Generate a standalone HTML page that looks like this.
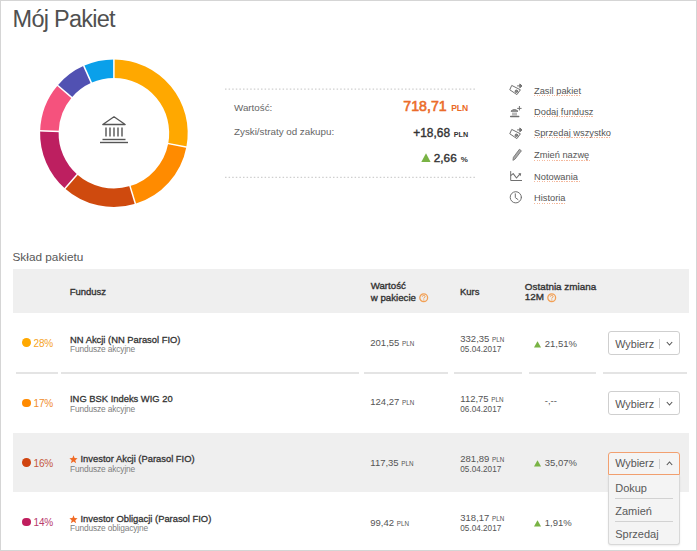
<!DOCTYPE html>
<html><head><meta charset="utf-8"><style>
html,body{margin:0;padding:0;}
body{width:697px;height:551px;overflow:hidden;position:relative;background:#fff;font-family:"Liberation Sans",sans-serif;}
.frame{position:absolute;left:0;top:0;width:697px;height:551px;box-sizing:border-box;border:1px solid #d5d5d5;}
.t{position:absolute;white-space:nowrap;}
</style></head><body>
<div class="frame"></div>
<div class="t" style="top:8.01px;font-size:23.5px;line-height:23.5px;color:#505050;letter-spacing:-0.75px;left:12.60px;">Mój Pakiet</div>
<svg style="position:absolute;left:0;top:0" width="697" height="551"><path d="M113.90 59.40A73.8 73.8 0 0 1 186.39 147.03L168.22 143.56A55.3 55.3 0 0 0 113.90 77.90Z" fill="#ffa800"/><path d="M186.39 147.03A73.8 73.8 0 0 1 135.38 203.81L129.99 186.11A55.3 55.3 0 0 0 168.22 143.56Z" fill="#ff8b00"/><path d="M135.38 203.81A73.8 73.8 0 0 1 64.92 188.40L77.20 174.57A55.3 55.3 0 0 0 129.99 186.11Z" fill="#cf4a0e"/><path d="M64.92 188.40A73.8 73.8 0 0 1 40.14 130.88L58.63 131.46A55.3 55.3 0 0 0 77.20 174.57Z" fill="#bd1f60"/><path d="M40.14 130.88A73.8 73.8 0 0 1 57.63 85.45L71.74 97.42A55.3 55.3 0 0 0 58.63 131.46Z" fill="#f5527d"/><path d="M57.63 85.45A73.8 73.8 0 0 1 83.74 65.84L91.30 82.73A55.3 55.3 0 0 0 71.74 97.42Z" fill="#5151b2"/><path d="M83.74 65.84A73.8 73.8 0 0 1 113.90 59.40L113.90 77.90A55.3 55.3 0 0 0 91.30 82.73Z" fill="#0aa0ea"/><line x1="113.90" y1="78.90" x2="113.90" y2="58.40" stroke="#fff" stroke-width="1.5"/><line x1="167.24" y1="143.37" x2="187.38" y2="147.22" stroke="#fff" stroke-width="1.5"/><line x1="129.70" y1="185.15" x2="135.67" y2="204.76" stroke="#fff" stroke-width="1.5"/><line x1="77.86" y1="173.82" x2="64.26" y2="189.15" stroke="#fff" stroke-width="1.5"/><line x1="59.63" y1="131.49" x2="39.14" y2="130.85" stroke="#fff" stroke-width="1.5"/><line x1="72.50" y1="98.06" x2="56.87" y2="84.80" stroke="#fff" stroke-width="1.5"/><line x1="91.71" y1="83.64" x2="83.33" y2="64.93" stroke="#fff" stroke-width="1.5"/><g fill="none" stroke="#555" stroke-width="1.3" stroke-linejoin="round"><path d="M114 116.8 L125.2 124.5 L102.8 124.5 Z"/></g><g stroke="#555" stroke-width="1.4"><line x1="106" y1="127.5" x2="106" y2="136.5"/><line x1="110" y1="127.5" x2="110" y2="136.5"/><line x1="114" y1="127.5" x2="114" y2="136.5"/><line x1="118" y1="127.5" x2="118" y2="136.5"/><line x1="122" y1="127.5" x2="122" y2="136.5"/><line x1="102.5" y1="139.5" x2="125.5" y2="139.5"/><line x1="100" y1="142.5" x2="128" y2="142.5"/></g></svg>
<svg style="position:absolute;left:0;top:0" width="697" height="551"><g stroke="#cfcfcf" stroke-width="1.3" stroke-dasharray="1.5 2.1"><line x1="225" y1="89.2" x2="477" y2="89.2"/><line x1="225" y1="177.4" x2="477" y2="177.4"/></g></svg>
<div class="t" style="top:103.00px;font-size:9.8px;line-height:9.8px;color:#666;left:234.00px;">Wartość:</div>
<div class="t" style="top:127.01px;font-size:9.8px;line-height:9.8px;color:#666;left:234.00px;">Zyski/straty od zakupu:</div>
<div class="t" style="top:99.01px;font-size:14.2px;line-height:14.2px;color:#eb6c2a;-webkit-text-stroke:0.6px #eb6c2a;right:250.30px;">718,71</div>
<div class="t" style="top:104.01px;font-size:8.5px;line-height:8.5px;color:#ea6a26;font-weight:700;right:228.80px;">PLN</div>
<div class="t" style="top:128.00px;font-size:11.9px;line-height:11.9px;color:#333;-webkit-text-stroke:0.38px #333;right:247.00px;">+18,68</div>
<div class="t" style="top:131.01px;font-size:7.2px;line-height:7.2px;color:#333;font-weight:700;right:228.80px;">PLN</div>
<svg style="position:absolute;left:421px;top:153px" width="10" height="9"><path d="M5 0.3 L9.6 8.9 L0.3 8.9Z" fill="#79b345"/></svg>
<div class="t" style="top:153.01px;font-size:11.8px;line-height:11.8px;color:#333;-webkit-text-stroke:0.38px #333;right:240.30px;">2,66</div>
<div class="t" style="top:156.00px;font-size:8px;line-height:8px;color:#333;font-weight:700;right:229.20px;">%</div>
<div class="t" style="top:87.01px;font-size:9.3px;line-height:9.3px;color:#555;left:534.00px;">Zasil pakiet</div>
<div class="t" style="top:108.00px;font-size:9.3px;line-height:9.3px;color:#555;left:534.00px;">Dodaj fundusz</div>
<div class="t" style="top:129.00px;font-size:9.3px;line-height:9.3px;color:#555;left:534.00px;">Sprzedaj wszystko</div>
<div class="t" style="top:151.01px;font-size:9.3px;line-height:9.3px;color:#555;left:534.00px;">Zmień nazwę</div>
<div class="t" style="top:173.01px;font-size:9.3px;line-height:9.3px;color:#555;left:534.00px;">Notowania</div>
<div class="t" style="top:194.01px;font-size:9.3px;line-height:9.3px;color:#555;left:534.00px;">Historia</div>
<div style="position:absolute;left:534px;top:95.2px;width:46.8px;height:1px;background-image:repeating-linear-gradient(to right,#f4b89c 0,#f4b89c 1.2px,transparent 1.2px,transparent 2.5px);"></div>
<div style="position:absolute;left:534px;top:116.1px;width:60.3px;height:1px;background-image:repeating-linear-gradient(to right,#f4b89c 0,#f4b89c 1.2px,transparent 1.2px,transparent 2.5px);"></div>
<div style="position:absolute;left:534px;top:137.4px;width:76.9px;height:1px;background-image:repeating-linear-gradient(to right,#f4b89c 0,#f4b89c 1.2px,transparent 1.2px,transparent 2.5px);"></div>
<div style="position:absolute;left:534px;top:159.8px;width:56.3px;height:1px;background-image:repeating-linear-gradient(to right,#f4b89c 0,#f4b89c 1.2px,transparent 1.2px,transparent 2.5px);"></div>
<div style="position:absolute;left:534px;top:181.3px;width:46px;height:1px;background-image:repeating-linear-gradient(to right,#f4b89c 0,#f4b89c 1.2px,transparent 1.2px,transparent 2.5px);"></div>
<div style="position:absolute;left:534px;top:202.8px;width:32.2px;height:1px;background-image:repeating-linear-gradient(to right,#f4b89c 0,#f4b89c 1.2px,transparent 1.2px,transparent 2.5px);"></div>
<svg style="position:absolute;left:0;top:0" width="697" height="551"><g fill="none" stroke="#707070" stroke-width="1" stroke-linecap="round" stroke-linejoin="round"><g transform="translate(509.5 84.5)"><path d="M2.6 1.1 L10.9 5.3 L7.4 10.1 L0.6 5.5 Z"/><circle cx="6.9" cy="6.8" r="1.3" fill="#888"/><path d="M8 1.4 H11"/><path d="M10.6 -0.3 L12.5 1.4 L10.6 3.1Z" fill="#707070"/></g><g transform="translate(509.5 128.5)"><path d="M2.6 1.1 L10.9 5.3 L7.4 10.1 L0.6 5.5 Z"/><circle cx="6.9" cy="6.8" r="1.3" fill="#888"/><path d="M8 1.4 H11"/><path d="M10.6 -0.3 L12.5 1.4 L10.6 3.1Z" fill="#707070"/></g><g transform="translate(510 107)"><path d="M1.2 4 Q4.4 0.8 7.7 4 Z" fill="#999"/><path d="M2 5.5 H7 V8.5 H2Z" fill="#bbb" stroke="none"/><path d="M0.6 9.5 H8.8" stroke-width="1.3"/><path d="M9.4 -0.6 V3 M7.6 1.4 H11.2"/></g><path d="M513 160 L513.4 157.3 L519.4 149.3 L521.4 150.8 L515.3 158.8 Z" fill="#aaa" stroke="#777" stroke-width="0.9"/><path d="M510.7 171.5 V180.5 H521.6"/><path d="M511 175.4 L513.2 173.6 L516.5 178 L519.8 174.2" stroke-width="1.1"/><path d="M518.3 173.2 L521.2 173.2 L520.6 176.2Z" fill="#707070" stroke="none"/><circle cx="515.8" cy="197.3" r="5.6"/><path d="M515.3 193.8 V197.6 L518 199.6"/></g></svg>
<div class="t" style="top:252.01px;font-size:11.8px;line-height:11.8px;color:#585858;left:12.50px;">Skład pakietu</div>
<div style="position:absolute;left:13px;top:269px;width:676px;height:44px;background:#efefef;"></div>
<div class="t" style="top:287.01px;font-size:9.5px;line-height:9.5px;color:#333;-webkit-text-stroke:0.35px #333;left:69.70px;">Fundusz</div>
<div class="t" style="top:281.01px;font-size:9.7px;line-height:9.7px;color:#333;-webkit-text-stroke:0.35px #333;left:370.70px;">Wartość</div>
<div class="t" style="top:293.01px;font-size:9.7px;line-height:9.7px;color:#333;-webkit-text-stroke:0.35px #333;left:370.70px;">w pakiecie</div>
<div class="t" style="top:287.01px;font-size:9.5px;line-height:9.5px;color:#333;-webkit-text-stroke:0.35px #333;left:459.90px;">Kurs</div>
<div class="t" style="top:282.00px;font-size:9.9px;line-height:9.9px;color:#333;-webkit-text-stroke:0.35px #333;left:524.80px;">Ostatnia zmiana</div>
<div class="t" style="top:292.01px;font-size:9.9px;line-height:9.9px;color:#333;-webkit-text-stroke:0.35px #333;left:524.80px;">12M</div>
<svg style="position:absolute;left:419px;top:293px" width="10" height="10"><circle cx="4.7" cy="4.7" r="3.9" fill="none" stroke="#f2a055" stroke-width="1.3"/><path d="M3.3 3.7 Q3.4 2.4 4.7 2.4 Q6.1 2.4 6.1 3.6 Q6.1 4.4 4.8 4.9 V5.5" fill="none" stroke="#f2a055" stroke-width="1"/><circle cx="4.8" cy="6.9" r="0.6" fill="#f2a055"/></svg>
<svg style="position:absolute;left:547px;top:292.5px" width="10" height="10"><circle cx="4.7" cy="4.7" r="3.9" fill="none" stroke="#f2a055" stroke-width="1.3"/><path d="M3.3 3.7 Q3.4 2.4 4.7 2.4 Q6.1 2.4 6.1 3.6 Q6.1 4.4 4.8 4.9 V5.5" fill="none" stroke="#f2a055" stroke-width="1"/><circle cx="4.8" cy="6.9" r="0.6" fill="#f2a055"/></svg>
<div style="position:absolute;left:21.9px;top:338.1px;width:8.8px;height:8.8px;background:#ffa800;border-radius:50%;"></div>
<div class="t" style="top:339.00px;font-size:10px;line-height:10px;color:#f5a325;letter-spacing:-0.2px;left:33.60px;">28%</div>
<div class="t" style="top:335.01px;font-size:9.4px;line-height:9.4px;color:#333;-webkit-text-stroke:0.3px #333;left:70.00px;">NN Akcji (NN Parasol FIO)</div>
<div class="t" style="top:345.01px;font-size:8.4px;line-height:8.4px;color:#808080;letter-spacing:-0.15px;left:70.00px;">Fundusze akcyjne</div>
<div class="t" style="top:338.01px;font-size:9.5px;line-height:9.5px;color:#555;left:370.30px;">201,55 <span style="font-size:6.3px">PLN</span></div>
<div class="t" style="top:334.01px;font-size:9.5px;line-height:9.5px;color:#555;left:460.30px;">332,35 <span style="font-size:6.3px">PLN</span></div>
<div class="t" style="top:346.00px;font-size:8.2px;line-height:8.2px;color:#555;left:460.30px;">05.04.2017</div>
<svg style="position:absolute;left:534px;top:340.8px" width="8" height="7"><path d="M3.5 0.2 L7 6.5 L0 6.5Z" fill="#79b345"/></svg>
<div class="t" style="top:339.01px;font-size:9.5px;line-height:9.5px;color:#555;left:544.80px;">21,51%</div>
<div style="position:absolute;left:608.2px;top:331.1px;width:71.8px;height:24px;box-sizing:border-box;border:1px solid #cfcfcf;border-radius:3px;background:#fff;"></div>
<div class="t" style="top:339.01px;font-size:10.8px;line-height:10.8px;color:#555;left:615.20px;">Wybierz</div>
<div style="position:absolute;left:658.8px;top:338.5px;width:1px;height:10px;background:#cfcfcf;"></div>
<svg style="position:absolute;left:666px;top:341.4px" width="8" height="5"><path d="M0.8 1 L3.5 4 L6.2 1" fill="none" stroke="#555" stroke-width="1.1"/></svg>
<div style="position:absolute;left:16px;top:372px;width:42px;height:1.5px;background:#e4e4e4;"></div>
<div style="position:absolute;left:61px;top:372px;width:297.5px;height:1.5px;background:#e4e4e4;"></div>
<div style="position:absolute;left:364px;top:372px;width:84px;height:1.5px;background:#e4e4e4;"></div>
<div style="position:absolute;left:453.7px;top:372px;width:68.3px;height:1.5px;background:#e4e4e4;"></div>
<div style="position:absolute;left:528.5px;top:372px;width:67.7px;height:1.5px;background:#e4e4e4;"></div>
<div style="position:absolute;left:602.8px;top:372px;width:84.5px;height:1.5px;background:#e4e4e4;"></div>
<div style="position:absolute;left:21.9px;top:398.7px;width:8.8px;height:8.8px;background:#ff8a00;border-radius:50%;"></div>
<div class="t" style="top:399.00px;font-size:10px;line-height:10px;color:#f08c2c;letter-spacing:-0.2px;left:33.60px;">17%</div>
<div class="t" style="top:394.00px;font-size:9.4px;line-height:9.4px;color:#333;-webkit-text-stroke:0.3px #333;left:70.00px;">ING BSK Indeks WIG 20</div>
<div class="t" style="top:405.00px;font-size:8.4px;line-height:8.4px;color:#808080;letter-spacing:-0.15px;left:70.00px;">Fundusze akcyjne</div>
<div class="t" style="top:397.00px;font-size:9.5px;line-height:9.5px;color:#555;left:370.30px;">124,27 <span style="font-size:6.3px">PLN</span></div>
<div class="t" style="top:394.01px;font-size:9.5px;line-height:9.5px;color:#555;left:460.30px;">112,75 <span style="font-size:6.3px">PLN</span></div>
<div class="t" style="top:406.00px;font-size:8.2px;line-height:8.2px;color:#555;left:460.30px;">06.04.2017</div>
<div class="t" style="top:396.01px;font-size:9.5px;line-height:9.5px;color:#555;left:544.80px;">-,--</div>
<div style="position:absolute;left:608.2px;top:390.8px;width:71.8px;height:24px;box-sizing:border-box;border:1px solid #cfcfcf;border-radius:3px;background:#fff;"></div>
<div class="t" style="top:399.00px;font-size:10.8px;line-height:10.8px;color:#555;left:615.20px;">Wybierz</div>
<div style="position:absolute;left:658.8px;top:398.2px;width:1px;height:10px;background:#cfcfcf;"></div>
<svg style="position:absolute;left:666px;top:401.1px" width="8" height="5"><path d="M0.8 1 L3.5 4 L6.2 1" fill="none" stroke="#555" stroke-width="1.1"/></svg>
<div style="position:absolute;left:13px;top:433px;width:676px;height:58.5px;background:#efefef;"></div>
<div style="position:absolute;left:21.9px;top:457.8px;width:8.8px;height:8.8px;background:#d0440f;border-radius:50%;"></div>
<div class="t" style="top:459.01px;font-size:10px;line-height:10px;color:#c4563c;letter-spacing:-0.2px;left:33.60px;">16%</div>
<svg style="position:absolute;left:69px;top:455.0px" width="9" height="9"><path d="M4.5 0.3 L5.6 3.1 L8.6 3.3 L6.3 5.2 L7.1 8.2 L4.5 6.5 L1.9 8.2 L2.7 5.2 L0.4 3.3 L3.4 3.1Z" fill="#f06a24"/></svg>
<div class="t" style="top:454.01px;font-size:9.4px;line-height:9.4px;color:#333;-webkit-text-stroke:0.3px #333;left:80.50px;">Investor Akcji (Parasol FIO)</div>
<div class="t" style="top:465.01px;font-size:8.4px;line-height:8.4px;color:#808080;letter-spacing:-0.15px;left:70.00px;">Fundusze akcyjne</div>
<div class="t" style="top:458.00px;font-size:9.5px;line-height:9.5px;color:#555;left:370.30px;">117,35 <span style="font-size:6.3px">PLN</span></div>
<div class="t" style="top:454.00px;font-size:9.5px;line-height:9.5px;color:#555;left:460.30px;">281,89 <span style="font-size:6.3px">PLN</span></div>
<div class="t" style="top:466.01px;font-size:8.2px;line-height:8.2px;color:#555;left:460.30px;">05.04.2017</div>
<svg style="position:absolute;left:534px;top:460.0px" width="8" height="7"><path d="M3.5 0.2 L7 6.5 L0 6.5Z" fill="#79b345"/></svg>
<div class="t" style="top:458.01px;font-size:9.5px;line-height:9.5px;color:#555;left:544.80px;">35,07%</div>
<div style="position:absolute;left:608.2px;top:451.7px;width:71.5px;height:23px;box-sizing:border-box;border:1px solid #f2a070;border-radius:3px 3px 0 0;background:#f4f4f4;"></div>
<div class="t" style="top:458.01px;font-size:10.8px;line-height:10.8px;color:#555;left:615.20px;">Wybierz</div>
<div style="position:absolute;left:658.8px;top:459.1px;width:1px;height:10px;background:#cfcfcf;"></div>
<svg style="position:absolute;left:666px;top:461.0px" width="8" height="5"><path d="M0.8 4 L3.5 1 L6.2 4" fill="none" stroke="#555" stroke-width="1.1"/></svg>
<div style="position:absolute;left:21.9px;top:517.6px;width:8.8px;height:8.8px;background:#c01e5e;border-radius:50%;"></div>
<div class="t" style="top:518.01px;font-size:10px;line-height:10px;color:#b83a6c;letter-spacing:-0.2px;left:33.60px;">14%</div>
<svg style="position:absolute;left:69px;top:515.2px" width="9" height="9"><path d="M4.5 0.3 L5.6 3.1 L8.6 3.3 L6.3 5.2 L7.1 8.2 L4.5 6.5 L1.9 8.2 L2.7 5.2 L0.4 3.3 L3.4 3.1Z" fill="#f06a24"/></svg>
<div class="t" style="top:514.00px;font-size:9.4px;line-height:9.4px;color:#333;-webkit-text-stroke:0.3px #333;left:80.50px;">Investor Obligacji (Parasol FIO)</div>
<div class="t" style="top:524.00px;font-size:8.4px;line-height:8.4px;color:#808080;letter-spacing:-0.15px;left:70.00px;">Fundusze obligacyjne</div>
<div class="t" style="top:518.00px;font-size:9.5px;line-height:9.5px;color:#555;left:370.30px;">99,42 <span style="font-size:6.3px">PLN</span></div>
<div class="t" style="top:513.00px;font-size:9.5px;line-height:9.5px;color:#555;left:460.30px;">318,17 <span style="font-size:6.3px">PLN</span></div>
<div class="t" style="top:525.01px;font-size:8.2px;line-height:8.2px;color:#555;left:460.30px;">05.04.2017</div>
<svg style="position:absolute;left:534px;top:520.0px" width="8" height="7"><path d="M3.5 0.2 L7 6.5 L0 6.5Z" fill="#79b345"/></svg>
<div class="t" style="top:518.01px;font-size:9.5px;line-height:9.5px;color:#555;left:544.80px;">1,91%</div>
<div style="position:absolute;left:608.2px;top:474.7px;width:71.5px;height:70px;box-sizing:border-box;border:1px solid #d8d8d8;border-top:none;border-radius:0 0 3px 3px;background:#f4f4f4;box-shadow:0 1px 2px rgba(0,0,0,0.08);"></div>
<div class="t" style="top:483.00px;font-size:11px;line-height:11px;color:#5a5a5a;left:615.20px;">Dokup</div>
<div style="position:absolute;left:615.2px;top:498.3px;width:58px;height:1.2px;background:#d2d2d2;"></div>
<div class="t" style="top:506.00px;font-size:11px;line-height:11px;color:#5a5a5a;left:615.20px;">Zamień</div>
<div style="position:absolute;left:615.2px;top:521.2px;width:58px;height:1.2px;background:#d2d2d2;"></div>
<div class="t" style="top:529.01px;font-size:11px;line-height:11px;color:#5a5a5a;left:615.20px;">Sprzedaj</div>
</body></html>
